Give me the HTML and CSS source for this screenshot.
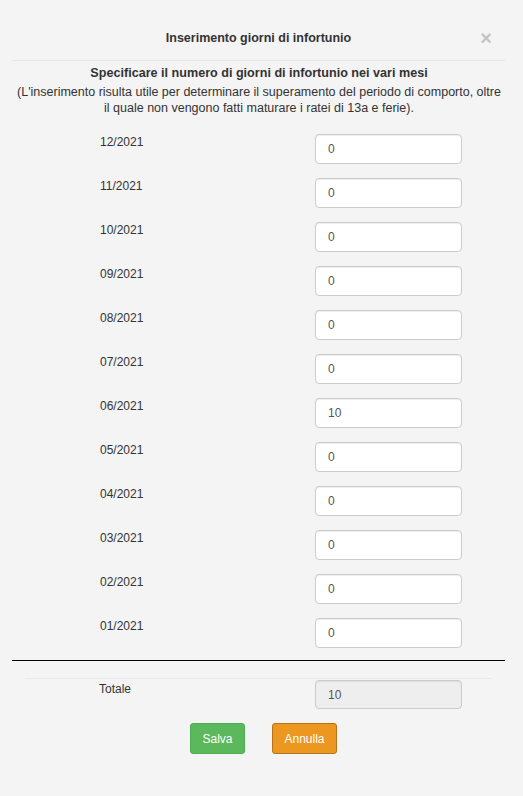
FILE: index.html
```html
<!DOCTYPE html>
<html>
<head>
<meta charset="utf-8">
<link rel="stylesheet" href="styles.css">
</head>
<body>
<div class="modal">
  <div class="modal-header">
    <span class="modal-title">Inserimento giorni di infortunio</span>
    <span class="close">×</span>
  </div>
  <div class="intro">
    <div class="intro-title">Specificare il numero di giorni di infortunio nei vari mesi</div>
    <div class="intro-text">(L'inserimento risulta utile per determinare il superamento del periodo di comporto, oltre il quale non vengono fatti maturare i ratei di 13a e ferie).</div>
  </div>
  <div class="rows">
    <div class="row"><span class="label">12/2021</span><input class="field" value="0"></div>
    <div class="row"><span class="label">11/2021</span><input class="field" value="0"></div>
    <div class="row"><span class="label">10/2021</span><input class="field" value="0"></div>
    <div class="row"><span class="label">09/2021</span><input class="field" value="0"></div>
    <div class="row"><span class="label">08/2021</span><input class="field" value="0"></div>
    <div class="row"><span class="label">07/2021</span><input class="field" value="0"></div>
    <div class="row"><span class="label">06/2021</span><input class="field" value="10"></div>
    <div class="row"><span class="label">05/2021</span><input class="field" value="0"></div>
    <div class="row"><span class="label">04/2021</span><input class="field" value="0"></div>
    <div class="row"><span class="label">03/2021</span><input class="field" value="0"></div>
    <div class="row"><span class="label">02/2021</span><input class="field" value="0"></div>
    <div class="row"><span class="label">01/2021</span><input class="field" value="0"></div>
  </div>
  <hr class="black-line">
  <hr class="faint-line">
  <div class="row total-row"><span class="label total-label">Totale</span><input class="field disabled" value="10" disabled></div>
  <div class="buttons">
    <button class="btn btn-save">Salva</button>
    <button class="btn btn-cancel">Annulla</button>
  </div>
</div>
</body>
</html>
```
FILE: styles.css
```css
html, body {
  margin: 0;
  padding: 0;
  background: #f4f4f4;
}
body {
  font-family: "Liberation Sans", Arial, sans-serif;
  font-size: 12px;
  color: #333;
  width: 523px;
  height: 796px;
  overflow: hidden;
}
.modal {
  padding: 0;
}
.modal-header {
  position: relative;
  margin: 0 18px 0 12px;
  height: 61px;
  border-bottom: 1px solid #e5e5e5;
  display: flex;
  align-items: center;
  justify-content: center;
  padding-top: 16px;
  box-sizing: border-box;
}
.modal-title {
  font-weight: bold;
  font-size: 12.5px;
  line-height: 17px;
  color: #333;
}
.close {
  position: absolute;
  right: 13px;
  top: 28px;
  font-size: 20px;
  font-weight: bold;
  line-height: 20px;
  color: #c4c4c4;
}
.intro {
  text-align: center;
  padding: 4px 19px 0 14px;
  line-height: 16px;
  font-size: 12.5px;
}
.intro-title {
  font-weight: bold;
  font-size: 12.6px;
  margin-bottom: 3px;
}
.intro-text {
  padding: 0;
}
.rows {
  margin-top: 18px;
  display: flex;
  flex-direction: column;
  gap: 14px;
}
.row {
  display: flex;
  align-items: flex-start;
  padding-left: 100px;
}
.label {
  width: 215px;
  line-height: 17px;
  padding-top: 0px;
  font-size: 12px;
}
.field {
  box-sizing: border-box;
  width: 147px;
  height: 30px;
  border: 1px solid #ccc;
  border-radius: 4px;
  background: #fff;
  padding: 6px 12px;
  font-family: "Liberation Sans", Arial, sans-serif;
  font-size: 12px;
  color: #555;
  margin: 0;
  box-shadow: inset 0 1px 1px rgba(0,0,0,0.075);
}
.field.disabled {
  background: #eee;
  color: #555;
  opacity: 1;
  height: 29px;
}
.black-line {
  margin: 12px 18px 0 12px;
  border: 0;
  border-top: 1px solid #000;
  height: 0;
}
.faint-line {
  margin: 17px 31px 0 25px;
  border: 0;
  border-top: 1px solid #eaeaea;
  height: 0;
}
.total-row {
  margin-top: 1px;
}
.total-label {
  margin-left: -1px;
  margin-right: 1px;
  padding-top: 1px;
}
.buttons {
  display: flex;
  justify-content: flex-start;
  gap: 27px;
  padding-left: 190px;
  margin-top: 14px;
}
.btn {
  font-family: "Liberation Sans", Arial, sans-serif;
  font-size: 12px;
  color: #fff;
  height: 31px;
  border-radius: 3px;
  border: 1px solid;
  padding: 0;
  margin: 0;
}
.btn-save {
  width: 55px;
  background: #5cb85c;
  border-color: #4cae4c;
}
.btn-cancel {
  width: 65px;
  background: #ec971f;
  border-color: #b8731a;
}
```
